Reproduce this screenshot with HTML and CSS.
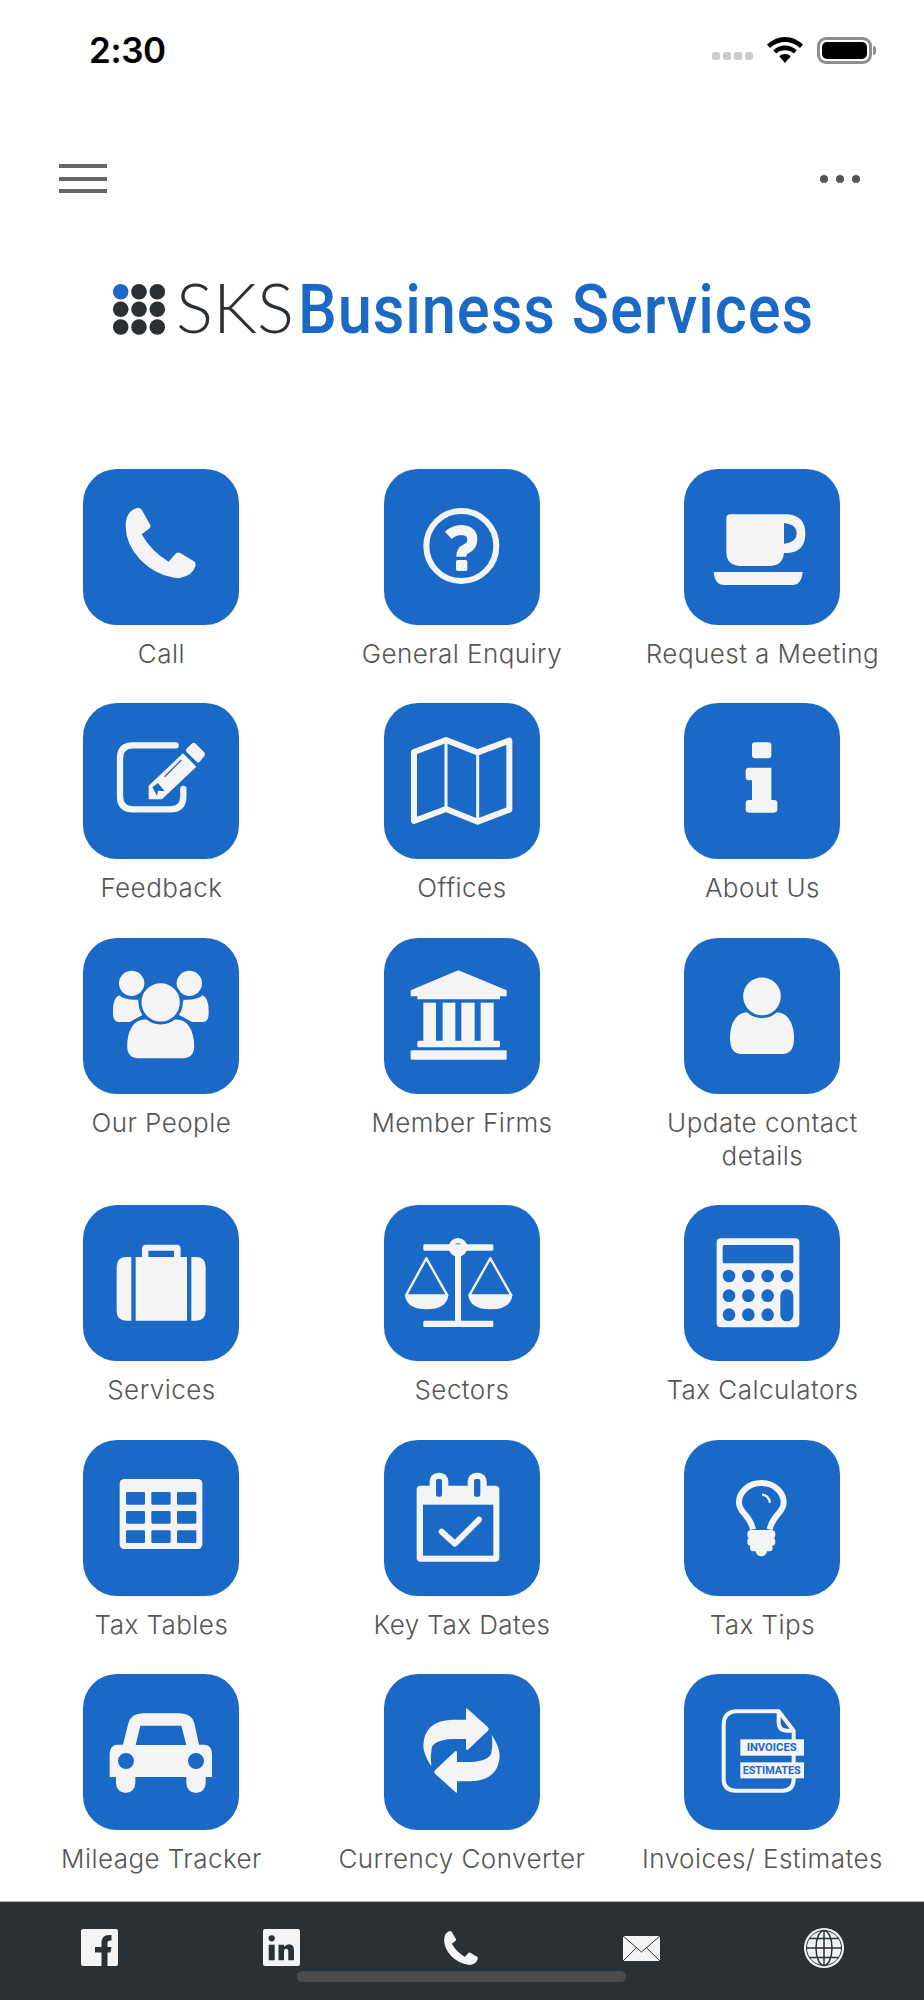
FILE: index.html
```html
<!DOCTYPE html>
<html lang="en">
<head>
<meta charset="utf-8">
<title>SKS Business Services</title>
<link rel="stylesheet" href="styles.css">
</head>
<body>
<div class="page">
  <header class="status">
    <span class="time">2:30</span>
    <div class="status-right">
      <div class="signal"><i></i><i></i><i></i><i></i></div>
      <svg class="wifi" viewBox="0 0 36 26"><path d="M18 0C11 0 5 3 0 7.500L3 11C7 7.500 12 5 18 5S29 7.500 33 11L36 7.500C31 3 25 0 18 0Z"/><path d="M18 8.500C13.500 8.500 9.500 10.200 6.300 13.200L9.300 16.500C11.500 14.500 14.600 13.300 18 13.300S24.500 14.500 26.700 16.500L29.700 13.200C26.500 10.200 22.500 8.500 18 8.500Z"/><path d="M18 17C15.800 17 13.800 17.800 12.300 19.200L18 26L23.700 19.200C22.200 17.800 20.200 17 18 17Z"/></svg>
      <div class="battery"><div class="battery-fill"></div></div>
    </div>
  </header>

  <nav class="nav">
    <div class="burger"><i></i><i></i><i></i></div>
    <div class="more"><i></i><i></i><i></i></div>
  </nav>

  <div class="logo-wrap">
    <svg class="logo" viewBox="0 0 924 100">
      <circle class="logo-blue" cx="120.700" cy="31.700" r="7.800"/>
      <circle class="logo-dark" cx="139" cy="31.700" r="7.800"/>
      <circle class="logo-dark" cx="157.300" cy="31.700" r="7.800"/>
      <circle class="logo-dark" cx="120.700" cy="49.300" r="7.800"/>
      <circle class="logo-dark" cx="139" cy="49.300" r="7.800"/>
      <circle class="logo-dark" cx="157.300" cy="49.300" r="7.800"/>
      <circle class="logo-dark" cx="120.700" cy="67" r="7.800"/>
      <circle class="logo-dark" cx="139" cy="67" r="7.800"/>
      <circle class="logo-dark" cx="157.300" cy="67" r="7.800"/>
      <text class="logo-sks" x="176" y="73" textLength="118" lengthAdjust="spacingAndGlyphs">SKS</text>
      <text class="logo-name" x="298" y="73" textLength="516" lengthAdjust="spacingAndGlyphs">Business Services</text>
    </svg>
  </div>

  <main class="grid">
    <a class="tile">
      <span class="box"><svg class="ico" viewBox="0 0 468 468"><path d="M165 116Q172 116 176 122L202 168Q204 174 198 179L176 196Q205 248 257 278L276 256Q284 248 292 252L335 278Q339 281 337 292Q330 320 288 328Q220 322 170 270Q128 225 128 170Q128 125 165 116Z"/></svg></span>
      <span class="label">Call</span>
    </a>
    <a class="tile">
      <span class="box"><svg class="ico" viewBox="0 0 468 468"><circle class="ln" cx="232" cy="231" r="105" stroke-width="18"/><path class="ln" d="M193 199Q210 183 232 183Q265 185 265 212Q265 232 245 240Q232 246 232 263" stroke-width="30"/><rect x="216" y="273" width="34" height="33" rx="5"/></svg></span>
      <span class="label">General Enquiry</span>
    </a>
    <a class="tile">
      <span class="box"><svg class="ico" viewBox="0 0 468 468"><path fill-rule="evenodd" d="M127 148Q127 136 139 136L310 136Q364 140 364 194Q364 248 310 252L300 252Q296 291 255 291L172 291Q127 291 127 250ZM300 162L300 224Q338 220 338 193Q338 166 300 162Z"/><path d="M89 309L356 309Q352 348 325 348L120 348Q93 348 89 309Z"/></svg></span>
      <span class="label">Request a Meeting</span>
    </a>

    <a class="tile">
      <span class="box"><svg class="ico" viewBox="0 0 468 468"><path class="ln round" d="M278 127L150 127Q111 127 111 166L111 280Q111 319 150 319L262 319Q301 319 301 280L301 258" stroke-width="19"/><path d="M326 122Q332 117 338 122L363 147Q369 153 364 159L350 176Q346 181 341 176L311 147Q306 142 311 137Z"/><path fill-rule="evenodd" d="M300 151L340 191L237 289L197 289L197 248ZM208 253L225 240L245 265L225 263L222 278Z"/><path class="ln-cut" d="M245 221L295 171" stroke-width="4"/></svg></span>
      <span class="label">Feedback</span>
    </a>
    <a class="tile">
      <span class="box"><svg class="ico" viewBox="0 0 468 468"><path class="ln round" d="M90 147L186 111L281 148L376 113L376 320L281 356L186 318L90 354Z" stroke-width="18"/><path class="ln" d="M186 111L186 318M281 148L281 356" stroke-width="9"/></svg></span>
      <span class="label">Offices</span>
    </a>
    <a class="tile">
      <span class="box"><svg class="ico" viewBox="0 0 468 468"><rect x="204" y="118" width="58" height="48" rx="9"/><path d="M195 194L262 194L262 291L270 291Q280 291 280 301L280 319Q280 329 270 329L195 329Q185 329 185 319L185 301Q185 291 195 291L204 291L204 232L195 232Q185 232 185 222L185 204Q185 194 195 194Z"/></svg></span>
      <span class="label">About Us</span>
    </a>

    <a class="tile">
      <span class="box"><svg class="ico" viewBox="0 0 468 468"><path d="M90 218Q90 180 108 172Q125 187 165 185L180 230L140 252L108 252Q90 252 90 225Z"/><path d="M377 218Q377 180 359 172Q342 187 302 185L287 230L327 252L359 252Q377 252 377 225Z"/><circle cx="146" cy="136" r="38"/><circle cx="319" cy="136" r="38"/><path class="ringed" d="M128 325C128 275 150 240 185 240L281 240C316 240 338 275 338 325Q338 365 300 365L166 365Q128 365 128 325Z"/><circle class="ringed" cx="233" cy="193" r="62"/></svg></span>
      <span class="label">Our People</span>
    </a>
    <a class="tile">
      <span class="box"><svg class="ico" viewBox="0 0 468 468"><path d="M223 97L368 157L368 175L348 175L348 184L100 184L100 175L80 175L80 157Z"/><rect x="118" y="194" width="38" height="116"/><rect x="176" y="194" width="38" height="116"/><rect x="232" y="194" width="40" height="116"/><rect x="290" y="194" width="39" height="116"/><rect x="100" y="308" width="248" height="20" rx="4"/><rect x="80" y="337" width="288" height="28" rx="3"/></svg></span>
      <span class="label">Member Firms</span>
    </a>
    <a class="tile">
      <span class="box"><svg class="ico" viewBox="0 0 468 468"><path d="M138 300C138 255 158 223 190 223L278 223C310 223 330 255 330 300Q330 348 295 348L172 348Q138 348 138 300Z"/><circle class="ringed" cx="234" cy="175" r="61"/></svg></span>
      <span class="label label-narrow">Update contact details</span>
    </a>

    <a class="tile">
      <span class="box"><svg class="ico" viewBox="0 0 468 468"><path fill-rule="evenodd" d="M158 156L177 156L177 131Q177 119 189 119L281 119Q293 119 293 131L293 156L312 156L312 347L158 347ZM196 137L196 156L273 156L273 137Z"/><path d="M145 156L145 347L130 347Q101 347 101 318L101 185Q101 156 130 156Z"/><path d="M325 156L325 347L339 347Q368 347 368 318L368 185Q368 156 339 156Z"/></svg></span>
      <span class="label">Services</span>
    </a>
    <a class="tile">
      <span class="box"><svg class="ico" viewBox="0 0 468 468"><rect x="118" y="118" width="210" height="19" rx="4"/><rect x="213" y="127" width="18" height="225"/><rect x="118" y="347" width="210" height="19" rx="4"/><path fill-rule="evenodd" d="M222 99A28 28 0 1 1 222 155A28 28 0 1 1 222 99ZM222 115A12 12 0 1 0 222 139A12 12 0 1 0 222 115Z"/><path class="ln round" d="M127 160L66 271L190 271Z" stroke-width="7"/><path class="ln round" d="M319 160L256 271L382 271Z" stroke-width="7"/><path d="M63 271L193 271Q188 313 128 313Q68 313 63 271Z"/><path d="M253 271L385 271Q380 313 319 313Q258 313 253 271Z"/></svg></span>
      <span class="label">Sectors</span>
    </a>
    <a class="tile">
      <span class="box"><svg class="ico" viewBox="0 0 468 468"><rect x="98" y="100" width="248" height="267" rx="12"/><rect class="cut" x="116" y="120" width="212" height="55" rx="5"/><circle class="cut" cx="135" cy="213" r="19"/><circle class="cut" cx="193" cy="213" r="19"/><circle class="cut" cx="251" cy="213" r="19"/><circle class="cut" cx="309" cy="213" r="19"/><circle class="cut" cx="135" cy="272" r="19"/><circle class="cut" cx="193" cy="272" r="19"/><circle class="cut" cx="251" cy="272" r="19"/><circle class="cut" cx="135" cy="329" r="19"/><circle class="cut" cx="193" cy="329" r="19"/><circle class="cut" cx="251" cy="329" r="19"/><rect class="cut" x="289" y="253" width="39" height="96" rx="19"/></svg></span>
      <span class="label">Tax Calculators</span>
    </a>

    <a class="tile">
      <span class="box"><svg class="ico" viewBox="0 0 468 468"><rect x="110" y="117" width="248" height="210" rx="14"/><rect class="cut" x="129" y="156" width="57" height="38" rx="4"/><rect class="cut" x="205" y="156" width="58" height="38" rx="4"/><rect class="cut" x="282" y="156" width="58" height="38" rx="4"/><rect class="cut" x="129" y="213" width="57" height="38" rx="4"/><rect class="cut" x="205" y="213" width="58" height="38" rx="4"/><rect class="cut" x="282" y="213" width="58" height="38" rx="4"/><rect class="cut" x="129" y="271" width="57" height="38" rx="4"/><rect class="cut" x="205" y="271" width="58" height="38" rx="4"/><rect class="cut" x="282" y="271" width="58" height="38" rx="4"/></svg></span>
      <span class="label">Tax Tables</span>
    </a>
    <a class="tile">
      <span class="box"><svg class="ico" viewBox="0 0 468 468"><rect x="98" y="137" width="248" height="228" rx="12"/><rect x="137" y="98" width="56" height="70" rx="26"/><rect x="251" y="98" width="57" height="70" rx="26"/><rect class="cut" x="156" y="117" width="18" height="53" rx="6"/><rect class="cut" x="270" y="117" width="19" height="53" rx="6"/><rect class="cut" x="117" y="194" width="211" height="153"/><path class="ln round" d="M173 275L213 311L285 239" stroke-width="18"/></svg></span>
      <span class="label">Key Tax Dates</span>
    </a>
    <a class="tile">
      <span class="box"><svg class="ico" viewBox="0 0 468 468"><path class="ln" d="M207 268Q202 245 182 222Q165 205 165 187A67 58 0 0 1 299 187Q299 205 282 222Q262 245 257 268" stroke-width="18"/><path class="ln" d="M234 164Q254 166 258 188" stroke-width="7"/><rect x="190" y="270" width="84" height="26" rx="12"/><rect x="190" y="292" width="84" height="26" rx="12"/><rect x="198" y="314" width="68" height="20" rx="10"/><circle cx="232" cy="332" r="17"/></svg></span>
      <span class="label">Tax Tips</span>
    </a>

    <a class="tile">
      <span class="box"><svg class="ico" viewBox="0 0 468 468"><path fill-rule="evenodd" d="M120 212L136 148Q144 118 180 118L290 118Q326 118 334 148L348 212L365 212Q387 214 387 240L387 309L368 309L368 328A29 29 0 0 1 310 328L310 309L157 309L157 328A29 29 0 0 1 99 328L99 309L80 309L80 240Q80 214 102 212ZM172 155L295 155L310 213L158 213ZM105 261A24 24 0 1 0 153 261A24 24 0 1 0 105 261ZM315 261A24 24 0 1 0 363 261A24 24 0 1 0 315 261Z"/></svg></span>
      <span class="label">Mileage Tracker</span>
    </a>
    <a class="tile">
      <span class="box"><svg class="ico" viewBox="0 0 468 468"><path d="M246 106Q246 100 252 106L312 160Q316 165 312 170L254 225Q246 232 246 222L246 195L205 195Q150 198 143 222Q138 250 142 277Q118 240 118 215Q120 140 205 137L246 137Z"/><path transform="rotate(180 232.500 229.500)" d="M246 106Q246 100 252 106L312 160Q316 165 312 170L254 225Q246 232 246 222L246 195L205 195Q150 198 143 222Q138 250 142 277Q118 240 118 215Q120 140 205 137L246 137Z"/></svg></span>
      <span class="label">Currency Converter</span>
    </a>
    <a class="tile">
      <span class="box"><svg class="ico" viewBox="0 0 468 468"><path class="ln round" d="M284 112L160 112Q119 112 119 153L119 315Q119 350 155 350L295 350Q329 350 329 315L329 170L284 112L284 145Q284 170 310 170L329 170" stroke-width="12"/><rect x="169" y="196" width="191" height="49"/><rect x="169" y="265" width="191" height="48"/><text class="ico-text" x="188" y="232" textLength="150" lengthAdjust="spacingAndGlyphs">INVOICES</text><text class="ico-text" x="176" y="301" textLength="174" lengthAdjust="spacingAndGlyphs">ESTIMATES</text></svg></span>
      <span class="label">Invoices/ Estimates</span>
    </a>
  </main>

  <footer class="footer">
    <svg class="f-ico f-square" viewBox="0 0 37 37"><rect class="f-fill" width="37" height="37" rx="2"/><path class="f-dark" d="M20.500 37V23.500H14V18H20.500V14Q20.500 6 28 6H30.500V11.500H29Q26.500 11.500 26.500 14V18H30.500L29.500 23.500H26.500V37Z"/></svg>
    <svg class="f-ico f-square" viewBox="0 0 37 37"><rect class="f-fill" width="37" height="37" rx="2"/><circle class="f-dark" cx="8.700" cy="9.300" r="3.100"/><rect class="f-dark" x="5.700" y="15.700" width="6" height="15.600"/><path class="f-dark" d="M15.500 15.700H21V18Q23 15.300 26 15.300Q31 15.300 31 21.500V31.300H25.300V22.500Q25.300 19.700 23.300 19.700Q21 19.700 21 22.500V31.300H15.500Z"/></svg>
    <svg class="f-ico f-phone" viewBox="128 116 210 212"><path class="f-fill" d="M165 116Q172 116 176 122L202 168Q204 174 198 179L176 196Q205 248 257 278L276 256Q284 248 292 252L335 278Q339 281 337 292Q330 320 288 328Q220 322 170 270Q128 225 128 170Q128 125 165 116Z"/></svg>
    <svg class="f-ico f-mail" viewBox="0 0 37 25"><rect class="f-fill" width="37" height="25"/><path class="f-line" d="M0 0L18.500 16L37 0M0 25L13.500 11.700M37 25L23.500 11.700" stroke-width="1"/></svg>
    <svg class="f-ico f-globe" viewBox="0 0 40 40"><circle class="f-fill" cx="20" cy="20" r="20"/><circle class="f-line" cx="20" cy="20" r="17.500" stroke-width="1"/><ellipse class="f-line" cx="20" cy="20" rx="8" ry="17.500" stroke-width="1.500"/><path class="f-line" d="M20 2.500V37.500M2.500 20H37.500M5.500 10.500H34.500M5.500 29.500H34.500" stroke-width="1.500"/></svg>
    <div class="home-bar"></div>
  </footer>
</div>
</body>
</html>
```
FILE: styles.css
```css
* { box-sizing: border-box; }
html, body { margin: 0; padding: 0; background: #fff; }
.page {
  width: 924px;
  height: 2000px;
  display: flex;
  flex-direction: column;
  overflow: hidden;
  font-family: Inter, "Liberation Sans", sans-serif;
}
.status {
  height: 100px;
  flex: none;
  display: flex;
  align-items: center;
  justify-content: space-between;
  padding: 0 52px 0 89px;
}
.time { font-size: 35px; font-weight: 600; color: #000; letter-spacing: -0.4px; }
.status-right { display: flex; align-items: center; }
.signal { display: flex; gap: 3px; margin: 12px 14px 0 0; }
.signal i { width: 8px; height: 8px; border-radius: 2.500px; background: #ccc; display: block; }
.wifi { width: 36px; height: 26px; fill: #000; margin-right: 14px; }
.battery {
  position: relative;
  width: 55px;
  height: 27px;
  border: 3px solid #8e8e8e;
  border-radius: 9px;
  padding: 2px;
}
.battery::after {
  content: "";
  position: absolute;
  right: -7px;
  top: 6px;
  width: 3px;
  height: 9px;
  border-radius: 0 3px 3px 0;
  background: #8e8e8e;
}
.battery-fill { width: 100%; height: 100%; background: #000; border-radius: 5px; }

.nav {
  flex: none;
  margin-top: 64px;
  height: 29px;
  padding: 0 64px 0 59px;
  display: flex;
  align-items: center;
  justify-content: space-between;
}
.burger { width: 48px; height: 29px; display: flex; flex-direction: column; justify-content: space-between; }
.burger i { display: block; height: 4px; background: #666; }
.more { display: flex; gap: 8px; }
.more i { display: block; width: 8px; height: 8px; border-radius: 50%; background: #555; }

.logo-wrap { flex: none; margin-top: 67px; height: 100px; }
.logo { width: 924px; height: 100px; display: block; }
.logo-blue { fill: #1b69c7; }
.logo-dark { fill: #2b3035; }
.logo-sks { font-family: Lato, sans-serif; font-weight: 300; font-size: 68px; fill: #2b3035; }
.logo-name { font-family: Roboto, sans-serif; font-weight: 500; font-size: 68px; letter-spacing: 1px; fill: #1b69c7; }

.grid {
  flex: 1;
  margin-top: 109px;
  padding: 0 11.200px;
  display: grid;
  grid-template-columns: repeat(3, 300.500px);
  grid-auto-rows: min-content;
  row-gap: 32.800px;
}
.tile { display: flex; flex-direction: column; align-items: center; text-align: center; }
.box {
  width: 156px;
  height: 156px;
  border-radius: 34px;
  background: #1b69c7;
  display: block;
}
.ico { width: 156px; height: 156px; display: block; fill: #f4f4f4; }
.ln { fill: none; stroke: #f4f4f4; }
.ln-cut { fill: none; stroke: #1b69c7; }
.round { stroke-linecap: round; stroke-linejoin: round; }
.cut { fill: #1b69c7; }
.ringed { stroke: #1b69c7; stroke-width: 9px; }
.ico-text { font-family: Roboto, sans-serif; font-weight: 700; font-size: 34px; fill: #1b69c7; }
.label {
  display: block;
  margin-top: 12px;
  width: 280px;
  font-size: 26px;
  font-weight: 350;
  letter-spacing: 0.45px;
  line-height: 33.500px;
  color: #555;
}
.label-narrow { width: 230px; }

.footer {
  flex: none;
  position: relative;
  height: 99px;
  background: #2b3035;
  border-top: 1px solid #b5b5b5;
  padding: 0 80px 0 81px;
  display: flex;
  align-items: flex-start;
  justify-content: space-between;
}
.f-ico { display: block; }
.f-square { width: 37px; height: 37px; margin-top: 27px; }
.f-phone { width: 34px; height: 34px; margin-top: 29px; }
.f-mail { width: 37px; height: 25px; margin-top: 34px; }
.f-globe { width: 40px; height: 40px; margin-top: 26px; }
.f-fill { fill: #f4f4f4; }
.f-dark { fill: #2b3035; }
.f-line { fill: none; stroke: #2b3035; }
.home-bar {
  position: absolute;
  left: 297px;
  top: 69px;
  width: 329px;
  height: 11px;
  border-radius: 6px;
  background: #4b4b4b;
}
```
